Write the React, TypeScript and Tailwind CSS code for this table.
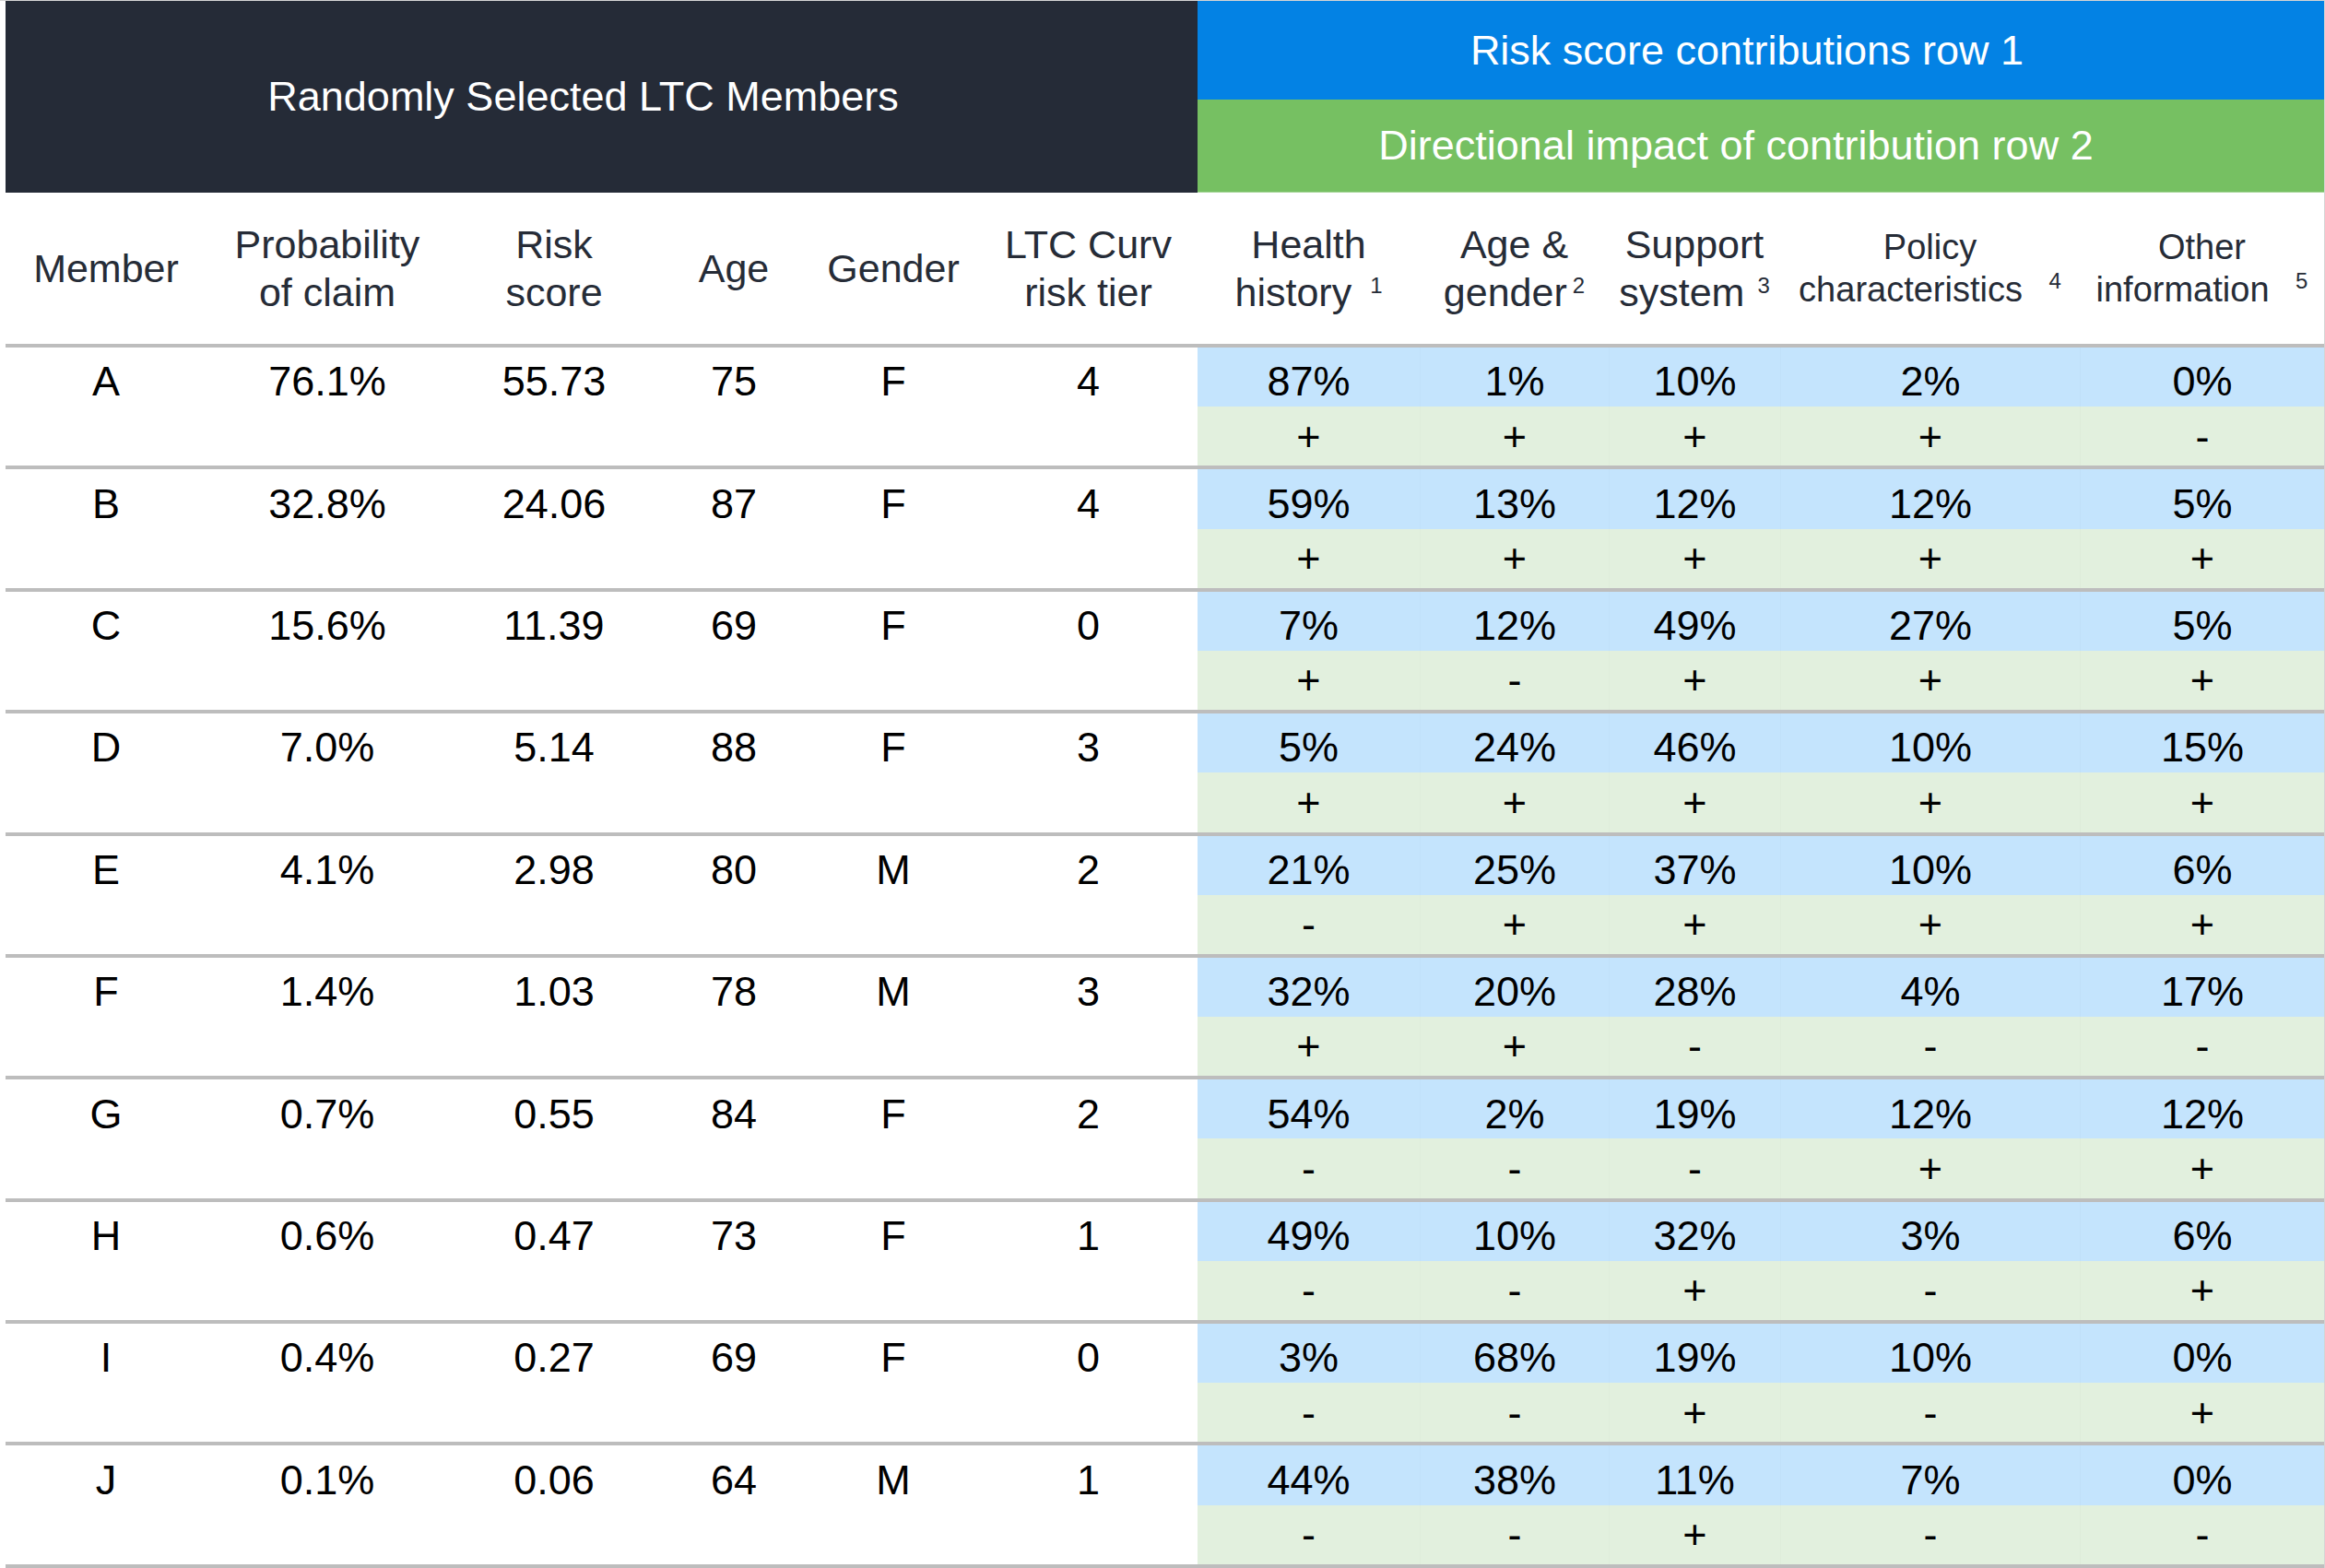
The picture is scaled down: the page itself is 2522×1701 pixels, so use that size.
const rows = [
  { m: 'A', p: '76.1%', r: '55.73', age: '75', g: 'F', t: '4', c: ['87%', '1%', '10%', '2%', '0%'], d: '++++-' },
  { m: 'B', p: '32.8%', r: '24.06', age: '87', g: 'F', t: '4', c: ['59%', '13%', '12%', '12%', '5%'], d: '+++++' },
  { m: 'C', p: '15.6%', r: '11.39', age: '69', g: 'F', t: '0', c: ['7%', '12%', '49%', '27%', '5%'], d: '+-+++' },
  { m: 'D', p: '7.0%', r: '5.14', age: '88', g: 'F', t: '3', c: ['5%', '24%', '46%', '10%', '15%'], d: '+++++' },
  { m: 'E', p: '4.1%', r: '2.98', age: '80', g: 'M', t: '2', c: ['21%', '25%', '37%', '10%', '6%'], d: '-++++' },
  { m: 'F', p: '1.4%', r: '1.03', age: '78', g: 'M', t: '3', c: ['32%', '20%', '28%', '4%', '17%'], d: '++---' },
  { m: 'G', p: '0.7%', r: '0.55', age: '84', g: 'F', t: '2', c: ['54%', '2%', '19%', '12%', '12%'], d: '---++' },
  { m: 'H', p: '0.6%', r: '0.47', age: '73', g: 'F', t: '1', c: ['49%', '10%', '32%', '3%', '6%'], d: '--+-+' },
  { m: 'I', p: '0.4%', r: '0.27', age: '69', g: 'F', t: '0', c: ['3%', '68%', '19%', '10%', '0%'], d: '--+-+' },
  { m: 'J', p: '0.1%', r: '0.06', age: '64', g: 'M', t: '1', c: ['44%', '38%', '11%', '7%', '0%'], d: '--+--' },
]

const cols = 'grid grid-cols-[218px_262px_230px_160px_186px_237px_241px_205px_186px_325px_265px]'

function Sup({ n, gap }: { n: string; gap: string }) {
  return <span className={`relative -top-[14px] text-[24px] leading-none ${gap}`}>{n}</span>
}

function HeaderCell({ children, small }: { children: React.ReactNode; small?: boolean }) {
  return (
    <div
      className={`flex items-center justify-center text-center ${
        small ? 'text-[38px] leading-[46px]' : 'text-[43px] leading-[52px]'
      }`}
    >
      <div>{children}</div>
    </div>
  )
}

function DataRow({ row }: { row: (typeof rows)[number] }) {
  const left = [row.m, row.p, row.r, row.age, row.g, row.t]
  return (
    <div>
      <div className={cols}>
        {left.map((v, i) => (
          <div key={i} className="h-[64.2px] flex items-center justify-center pt-[10px] bg-white">
            {v}
          </div>
        ))}
        {row.c.map((v, i) => (
          <div
            key={i}
            className={`h-[64.2px] flex items-center justify-center pt-[10px] bg-[#c4e4fd] ${
              i > 0 ? 'border-l border-[#c0e0f9]' : ''
            }`}
          >
            {v}
          </div>
        ))}
        {left.map((_, i) => (
          <div key={i} className="h-[64.2px] bg-white" />
        ))}
        {row.d.split('').map((s, i) => (
          <div
            key={i}
            className={`h-[64.2px] flex items-center justify-center bg-[#e2f0de] ${
              i > 0 ? 'border-l border-[#deecda]' : ''
            }`}
          >
            {s}
          </div>
        ))}
      </div>
      <div className="h-[4px] bg-[#bdbdbd]" />
    </div>
  )
}

export default function App() {
  return (
    <div className="w-[2522px] h-[1701px] bg-white overflow-hidden font-['Liberation_Sans',Arial,sans-serif]">
      <div className="pl-[6px] border-t border-[#d4d4d4]">
        <div className="border-r border-[#d4d4d4]">
          {/* Banner */}
          <div className="flex h-[208px]">
            <div className="w-[1293px] bg-[#252b37] text-white text-[45px] flex items-center justify-center pr-[40px]">
              Randomly Selected LTC Members
            </div>
            <div className="flex-1 flex flex-col text-white text-[45px]">
              <div className="h-[107px] bg-[#0382e4] flex items-center justify-center pr-[30px]">
                Risk score contributions row 1
              </div>
              <div className="flex-1 bg-[#76c062] flex items-center justify-center pr-[54px] border-b border-[#a9d79c]">
                Directional impact of contribution row 2
              </div>
            </div>
          </div>

          {/* Column headers */}
          <div className={`${cols} h-[164px] text-[#262c37]`}>
            <HeaderCell>Member</HeaderCell>
            <HeaderCell>
              Probability
              <br />
              of claim
            </HeaderCell>
            <HeaderCell>
              Risk
              <br />
              score
            </HeaderCell>
            <HeaderCell>Age</HeaderCell>
            <HeaderCell>Gender</HeaderCell>
            <HeaderCell>
              LTC Curv
              <br />
              risk tier
            </HeaderCell>
            <HeaderCell>
              Health
              <br />
              history <Sup n="1" gap="ml-[8px]" />
            </HeaderCell>
            <HeaderCell>
              Age &amp;
              <br />
              gender<Sup n="2" gap="ml-[6px]" />
            </HeaderCell>
            <HeaderCell>
              Support
              <br />
              system <Sup n="3" gap="ml-[2px]" />
            </HeaderCell>
            <HeaderCell small>
              Policy
              <br />
              characteristics <Sup n="4" gap="ml-[18px]" />
            </HeaderCell>
            <HeaderCell small>
              Other
              <br />
              information <Sup n="5" gap="ml-[18px]" />
            </HeaderCell>
          </div>
          <div className="h-[4px] bg-[#bdbdbd]" />

          {/* Data rows */}
          <div className="text-[45px] text-black">
            {rows.map((row) => (
              <DataRow key={row.m} row={row} />
            ))}
          </div>
        </div>
      </div>
    </div>
  )
}
